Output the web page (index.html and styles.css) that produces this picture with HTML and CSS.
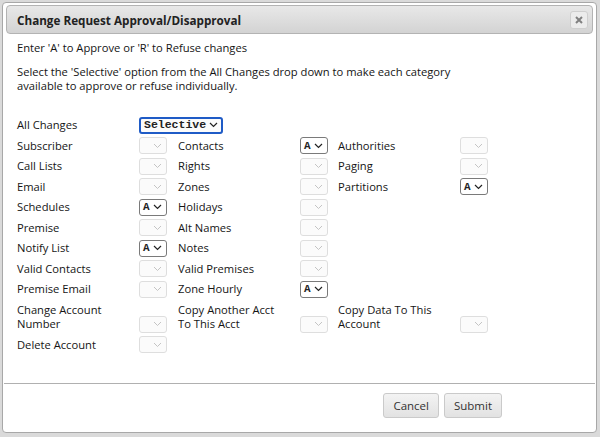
FILE: index.html
```html
<!DOCTYPE html>
<html lang="en">
<head>
    <meta charset="UTF-8">
    <title>Change Request Approval/Disapproval</title>
    <link rel="stylesheet" href="styles.css">
</head>
<body>
    <div class="dialog">
        <div class="titlebar">
            <span class="title">Change Request Approval/Disapproval</span>
            <span class="close">
                <svg width="8" height="8" viewBox="0 0 8 8"><path d="M1 1L7 7M7 1L1 7" stroke="#808080" stroke-width="2"/></svg>
            </span>
        </div>

        <div class="content">
            <p class="note">Enter 'A' to Approve or 'R' to Refuse changes</p>
            <p class="note">Select the 'Selective' option from the All Changes drop down to make each category<br>available to approve or refuse individually.</p>

            <div class="grid">
                <div class="label">All Changes</div>
                <div class="cell wide"><span class="sel focus">Selective<svg width="9" height="6" viewBox="0 0 9 6"><path d="M1 1L4.5 4.5L8 1" fill="none" stroke="#222" stroke-width="1.2"/></svg></span></div>

                <div class="label">Subscriber</div>
                <div class="cell"><span class="sel"><svg width="9" height="6" viewBox="0 0 9 6"><path d="M1 1L4.5 4.5L8 1" fill="none" stroke="#c4c4c4" stroke-width="1"/></svg></span></div>
                <div class="label">Contacts</div>
                <div class="cell"><span class="sel on">A<svg width="9" height="6" viewBox="0 0 9 6"><path d="M1 1L4.5 4.5L8 1" fill="none" stroke="#222" stroke-width="1.2"/></svg></span></div>
                <div class="label">Authorities</div>
                <div class="cell"><span class="sel"><svg width="9" height="6" viewBox="0 0 9 6"><path d="M1 1L4.5 4.5L8 1" fill="none" stroke="#c4c4c4" stroke-width="1"/></svg></span></div>

                <div class="label">Call Lists</div>
                <div class="cell"><span class="sel"><svg width="9" height="6" viewBox="0 0 9 6"><path d="M1 1L4.5 4.5L8 1" fill="none" stroke="#c4c4c4" stroke-width="1"/></svg></span></div>
                <div class="label">Rights</div>
                <div class="cell"><span class="sel"><svg width="9" height="6" viewBox="0 0 9 6"><path d="M1 1L4.5 4.5L8 1" fill="none" stroke="#c4c4c4" stroke-width="1"/></svg></span></div>
                <div class="label">Paging</div>
                <div class="cell"><span class="sel"><svg width="9" height="6" viewBox="0 0 9 6"><path d="M1 1L4.5 4.5L8 1" fill="none" stroke="#c4c4c4" stroke-width="1"/></svg></span></div>

                <div class="label">Email</div>
                <div class="cell"><span class="sel"><svg width="9" height="6" viewBox="0 0 9 6"><path d="M1 1L4.5 4.5L8 1" fill="none" stroke="#c4c4c4" stroke-width="1"/></svg></span></div>
                <div class="label">Zones</div>
                <div class="cell"><span class="sel"><svg width="9" height="6" viewBox="0 0 9 6"><path d="M1 1L4.5 4.5L8 1" fill="none" stroke="#c4c4c4" stroke-width="1"/></svg></span></div>
                <div class="label">Partitions</div>
                <div class="cell"><span class="sel on">A<svg width="9" height="6" viewBox="0 0 9 6"><path d="M1 1L4.5 4.5L8 1" fill="none" stroke="#222" stroke-width="1.2"/></svg></span></div>

                <div class="label">Schedules</div>
                <div class="cell"><span class="sel on">A<svg width="9" height="6" viewBox="0 0 9 6"><path d="M1 1L4.5 4.5L8 1" fill="none" stroke="#222" stroke-width="1.2"/></svg></span></div>
                <div class="label">Holidays</div>
                <div class="cell"><span class="sel"><svg width="9" height="6" viewBox="0 0 9 6"><path d="M1 1L4.5 4.5L8 1" fill="none" stroke="#c4c4c4" stroke-width="1"/></svg></span></div>
                <div class="label"></div>
                <div class="cell"></div>

                <div class="label">Premise</div>
                <div class="cell"><span class="sel"><svg width="9" height="6" viewBox="0 0 9 6"><path d="M1 1L4.5 4.5L8 1" fill="none" stroke="#c4c4c4" stroke-width="1"/></svg></span></div>
                <div class="label">Alt Names</div>
                <div class="cell"><span class="sel"><svg width="9" height="6" viewBox="0 0 9 6"><path d="M1 1L4.5 4.5L8 1" fill="none" stroke="#c4c4c4" stroke-width="1"/></svg></span></div>
                <div class="label"></div>
                <div class="cell"></div>

                <div class="label">Notify List</div>
                <div class="cell"><span class="sel on">A<svg width="9" height="6" viewBox="0 0 9 6"><path d="M1 1L4.5 4.5L8 1" fill="none" stroke="#222" stroke-width="1.2"/></svg></span></div>
                <div class="label">Notes</div>
                <div class="cell"><span class="sel"><svg width="9" height="6" viewBox="0 0 9 6"><path d="M1 1L4.5 4.5L8 1" fill="none" stroke="#c4c4c4" stroke-width="1"/></svg></span></div>
                <div class="label"></div>
                <div class="cell"></div>

                <div class="label">Valid Contacts</div>
                <div class="cell"><span class="sel"><svg width="9" height="6" viewBox="0 0 9 6"><path d="M1 1L4.5 4.5L8 1" fill="none" stroke="#c4c4c4" stroke-width="1"/></svg></span></div>
                <div class="label">Valid Premises</div>
                <div class="cell"><span class="sel"><svg width="9" height="6" viewBox="0 0 9 6"><path d="M1 1L4.5 4.5L8 1" fill="none" stroke="#c4c4c4" stroke-width="1"/></svg></span></div>
                <div class="label"></div>
                <div class="cell"></div>

                <div class="label">Premise Email</div>
                <div class="cell"><span class="sel"><svg width="9" height="6" viewBox="0 0 9 6"><path d="M1 1L4.5 4.5L8 1" fill="none" stroke="#c4c4c4" stroke-width="1"/></svg></span></div>
                <div class="label">Zone Hourly</div>
                <div class="cell"><span class="sel on">A<svg width="9" height="6" viewBox="0 0 9 6"><path d="M1 1L4.5 4.5L8 1" fill="none" stroke="#222" stroke-width="1.2"/></svg></span></div>
                <div class="label"></div>
                <div class="cell"></div>

                <div class="label">Change Account<br>Number</div>
                <div class="cell low"><span class="sel"><svg width="9" height="6" viewBox="0 0 9 6"><path d="M1 1L4.5 4.5L8 1" fill="none" stroke="#c4c4c4" stroke-width="1"/></svg></span></div>
                <div class="label">Copy Another Acct<br>To This Acct</div>
                <div class="cell low"><span class="sel"><svg width="9" height="6" viewBox="0 0 9 6"><path d="M1 1L4.5 4.5L8 1" fill="none" stroke="#c4c4c4" stroke-width="1"/></svg></span></div>
                <div class="label">Copy Data To This<br>Account</div>
                <div class="cell low"><span class="sel"><svg width="9" height="6" viewBox="0 0 9 6"><path d="M1 1L4.5 4.5L8 1" fill="none" stroke="#c4c4c4" stroke-width="1"/></svg></span></div>

                <div class="label">Delete Account</div>
                <div class="cell"><span class="sel"><svg width="9" height="6" viewBox="0 0 9 6"><path d="M1 1L4.5 4.5L8 1" fill="none" stroke="#c4c4c4" stroke-width="1"/></svg></span></div>
            </div>
        </div>

        <div class="footer">
            <button class="btn">Cancel</button>
            <button class="btn">Submit</button>
        </div>
    </div>
</body>
</html>
```

FILE: styles.css
```css
body {
    margin: 0;
    background: #dadada;
    font-family: 'Open Sans', sans-serif;
    color: #151515;
}

.dialog {
    margin: 2px 0 0 2px;
    width: 595px;
    height: 431px;
    box-sizing: border-box;
    background: #fff;
    border: 1px solid #a8a8a8;
    border-radius: 4px;
    padding: 2px 3px 0 3px;
    display: flex;
    flex-direction: column;
}

.titlebar {
    height: 29px;
    box-sizing: border-box;
    border: 1px solid #b3b3b3;
    border-radius: 4px;
    background: linear-gradient(#e8e8e8, #d3d3d3);
    display: flex;
    align-items: center;
    justify-content: space-between;
    padding: 0 4px 0 10px;
}

.title {
    font-size: 11.7px;
    font-weight: bold;
    color: #222;
}

.close {
    width: 18px;
    height: 18px;
    box-sizing: border-box;
    border: 1px solid #cfcfcf;
    border-radius: 3px;
    background: #ececec;
    display: flex;
    align-items: center;
    justify-content: center;
}

.content {
    flex: 1;
    padding: 7px 11px 0 11px;
}

.note {
    margin: 0 0 10px 0;
    font-size: 11.2px;
    line-height: 14px;
}

.grid {
    margin-top: 22px;
    display: grid;
    grid-template-columns: 122px 39px 122px 38px 122px 28px;
    grid-template-rows: repeat(9, 20.5px) 35px 20.5px;
    font-size: 11.2px;
    line-height: 14px;
}

.label {
    display: flex;
    align-items: center;
}

.cell {
    display: flex;
    align-items: center;
}

.cell.wide {
    grid-column: span 5;
}

.cell.low {
    align-items: flex-end;
    padding-bottom: 2px;
}

/* fake drop downs */
.sel {
    width: 28px;
    height: 17px;
    box-sizing: border-box;
    border: 1px solid #dedede;
    border-radius: 3px;
    background: #fbfbfb;
    display: flex;
    align-items: center;
    justify-content: flex-end;
    padding: 0 4px 0 3px;
    font-family: 'Liberation Mono', monospace;
    font-size: 11px;
    font-weight: bold;
    color: #222;
}

.sel.on {
    justify-content: space-between;
    border-color: #7a7a7a;
    background: #fff;
}

.sel.focus {
    width: 84px;
    justify-content: space-between;
    border: 2px solid #1f5bc6;
    padding: 0 3px 0 3px;
    font-size: 11.5px;
}

.footer {
    margin: 0 -2px 0 -2px;
    border-top: 1px solid #b0b0b0;
    height: 49px;
    box-sizing: border-box;
    display: flex;
    justify-content: flex-end;
    align-items: flex-start;
    gap: 5px;
    padding: 9px 93px 0 0;
}

.btn {
    height: 25px;
    padding: 0 9px;
    font-family: 'Open Sans', sans-serif;
    font-size: 11.5px;
    color: #333;
    background: linear-gradient(#f3f3f3, #e2e2e2);
    border: 1px solid #cacaca;
    border-radius: 3px;
}
```
